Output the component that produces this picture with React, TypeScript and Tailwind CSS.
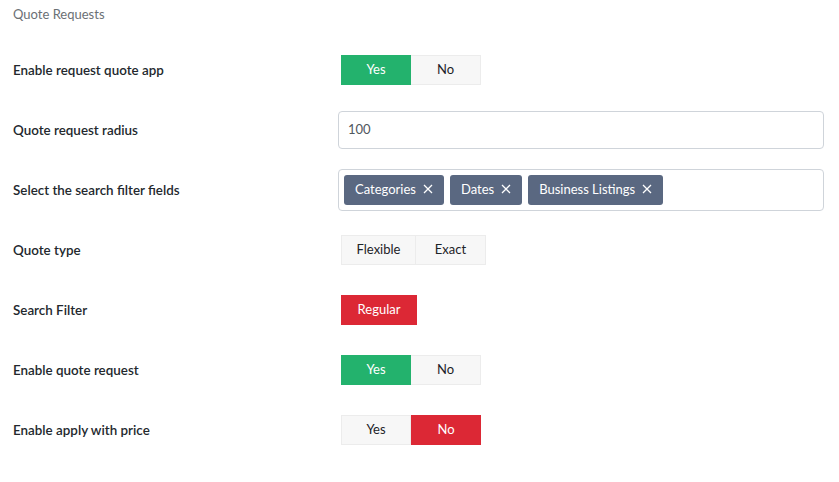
import React from "react";

const font = { fontFamily: 'Lato, "Open Sans", sans-serif' };

function Row({ label, children }: { label: string; children: React.ReactNode }) {
  return (
    <div className="flex items-center h-[60px]">
      <div className="w-[325px] shrink-0 text-[13.4px] font-semibold text-[#23282d]">{label}</div>
      <div className="flex-1 flex items-center">{children}</div>
    </div>
  );
}

function Seg({ items, active, color }: { items: string[]; active: number; color: string }) {
  return (
    <div className="flex ml-[3px]">
      {items.map((it, i) => {
        const on = i === active;
        return (
          <div
            key={it}
            className={
              "h-[30px] flex items-center justify-center text-[13px] " +
              (on ? "text-white " : "text-[#1d2327] bg-[#f7f7f7] border border-[#ececec] ") +
              (i > 0 && !on ? "border-l-0 " : "")
            }
            style={{
              width: it === "Flexible" ? 75 : it === "Regular" ? 76 : 70,
              background: on ? color : undefined,
            }}
          >
            {it}
          </div>
        );
      })}
    </div>
  );
}

export default function App() {
  return (
    <div className="w-[839px] h-[482px] bg-white pl-[13px] pr-[15px] pt-[5px]" style={font}>
      <div className="text-[13px] text-[#6b7075] h-[20px]">Quote Requests</div>
      <div className="mt-[15px]">
        <Row label="Enable request quote app">
          <Seg items={["Yes", "No"]} active={0} color="#23b26d" />
        </Row>
        <Row label="Quote request radius">
          <div className="w-full h-[38px] border border-[#cfd4da] rounded-[4px] flex items-center px-[9px] text-[13px] text-[#50575e]">
            100
          </div>
        </Row>
        <Row label="Select the search filter fields">
          <div className="w-full h-[42px] border border-[#cfd4da] rounded-[4px] flex items-center gap-[6px] px-[5px]">
            {["Categories", "Dates", "Business Listings"].map((t) => (
              <div
                key={t}
                className="h-[30px] bg-[#5a6881] rounded-[3px] text-white text-[13px] flex items-center pl-[11px] pr-[11px] gap-[7px]"
              >
                <span>{t}</span>
                <svg width="10" height="10" viewBox="0 0 10 10" className="-mt-[3px]">
                  <path d="M1 1L9 9M9 1L1 9" stroke="white" strokeWidth="1.3" />
                </svg>
              </div>
            ))}
          </div>
        </Row>
        <Row label="Quote type">
          <Seg items={["Flexible", "Exact"]} active={-1} color="" />
        </Row>
        <Row label="Search Filter">
          <Seg items={["Regular"]} active={0} color="#dc2835" />
        </Row>
        <Row label="Enable quote request">
          <Seg items={["Yes", "No"]} active={0} color="#23b26d" />
        </Row>
        <Row label="Enable apply with price">
          <Seg items={["Yes", "No"]} active={1} color="#dc2835" />
        </Row>
      </div>
    </div>
  );
}
